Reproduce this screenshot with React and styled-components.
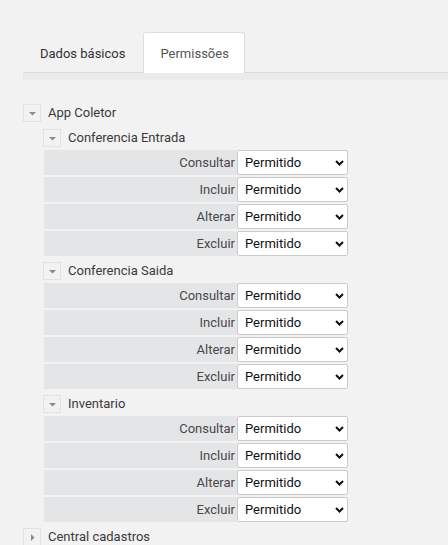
import React from 'react';
import styled, { createGlobalStyle } from 'styled-components';

const GlobalStyle = createGlobalStyle`
  html, body {
    margin: 0;
    padding: 0;
    background: #f2f2f2;
  }
  body {
    font-family: Roboto, "Liberation Sans", Arial, sans-serif;
    font-size: 13px;
    color: #333;
  }
`;

const Page = styled.div`
  padding: 32px 0 0 23px;
  overflow: hidden;
`;

const TabBar = styled.div`
  display: flex;
  gap: 1px;
  height: 40px;
  position: relative;
  z-index: 1;
`;

const Tab = styled.div`
  display: flex;
  align-items: center;
  padding: 1px ${({ active }) => (active ? '15px' : '16px')} 0 16px;
  height: ${({ active }) => (active ? '41px' : '40px')};
  box-sizing: border-box;
  background: ${({ active }) => (active ? '#fff' : 'transparent')};
  border: 1px solid ${({ active }) => (active ? '#dedede' : 'transparent')};
  border-bottom: none;
  border-radius: 3px 3px 0 0;
  color: ${({ active }) => (active ? '#555' : '#333')};
  cursor: pointer;
`;

const Strip = styled.div`
  height: 7px;
  background: #ebebeb;
  border-top: 1px solid #dadada;
`;

const Tree = styled.div`
  margin-top: 20px;
`;

const Node = styled.div`
  padding-left: ${({ level }) => (level > 0 ? '20px' : '0')};
`;

const NodeHeader = styled.div`
  display: flex;
  align-items: flex-start;
  height: 25px;
  padding-top: 4px;
  box-sizing: border-box;
  gap: 7px;
`;

const Toggle = styled.span`
  width: 18px;
  height: 18px;
  box-sizing: border-box;
  border: 1px solid #e2e2e2;
  background: #f2f2f2;
  display: flex;
  align-items: center;
  justify-content: center;
  flex: none;
`;

const NodeLabel = styled.span`
  line-height: 18px;
  color: #3a3a3a;
`;

const Rows = styled.div`
  display: flex;
  flex-direction: column;
  gap: 2px;
  padding-left: 1px;
  padding-bottom: 2px;
`;

const Row = styled.div`
  display: flex;
  height: 25px;
`;

const RowLabel = styled.div`
  width: 193px;
  background: #e4e5e7;
  display: flex;
  align-items: center;
  justify-content: flex-end;
  padding-right: 2px;
  box-sizing: border-box;
  color: #484848;
`;

const SelectWrap = styled.div`
  position: relative;
  width: 111px;
  height: 25px;
`;

const Select = styled.select`
  appearance: none;
  width: 100%;
  height: 100%;
  box-sizing: border-box;
  border: 1px solid #cbcbcb;
  border-radius: 2px;
  background: #fff;
  padding: 0 0 0 7px;
  font-family: Roboto, "Liberation Sans", Arial, sans-serif;
  font-size: 13px;
  color: #111;
  outline: none;
`;

const Chevron = styled.svg`
  position: absolute;
  right: 4px;
  top: 10px;
  pointer-events: none;
`;

const Caret = ({ open }) => (
  <svg width="9" height="9" viewBox="0 0 9 9">
    {open ? (
      <polygon points="1,3 8,3 4.5,6.5" fill="#8a8a8a" />
    ) : (
      <polygon points="3,1 6.5,4.5 3,8" fill="#8a8a8a" />
    )}
  </svg>
);

const actions = ['Consultar', 'Incluir', 'Alterar', 'Excluir'];

const PermRows = () => (
  <Rows>
    {actions.map((a) => (
      <Row key={a}>
        <RowLabel>{a}</RowLabel>
        <SelectWrap>
          <Select defaultValue="Permitido">
            <option>Permitido</option>
            <option>Negado</option>
          </Select>
          <Chevron width="9" height="6" viewBox="0 0 9 6">
            <path d="M1 1 L4.5 4.5 L8 1" stroke="#111" strokeWidth="2" fill="none" />
          </Chevron>
        </SelectWrap>
      </Row>
    ))}
  </Rows>
);

const modules = ['Conferencia Entrada', 'Conferencia Saida', 'Inventario'];

export default function App() {
  return (
    <Page>
      <GlobalStyle />
      <TabBar>
        <Tab>Dados básicos</Tab>
        <Tab active>Permissões</Tab>
      </TabBar>
      <Strip />
      <Tree>
        <Node level={0}>
          <NodeHeader>
            <Toggle><Caret open /></Toggle>
            <NodeLabel>App Coletor</NodeLabel>
          </NodeHeader>
          {modules.map((m) => (
            <Node level={1} key={m}>
              <NodeHeader>
                <Toggle><Caret open /></Toggle>
                <NodeLabel>{m}</NodeLabel>
              </NodeHeader>
              <PermRows />
            </Node>
          ))}
        </Node>
        <Node level={0}>
          <NodeHeader>
            <Toggle><Caret /></Toggle>
            <NodeLabel>Central cadastros</NodeLabel>
          </NodeHeader>
        </Node>
      </Tree>
    </Page>
  );
}
